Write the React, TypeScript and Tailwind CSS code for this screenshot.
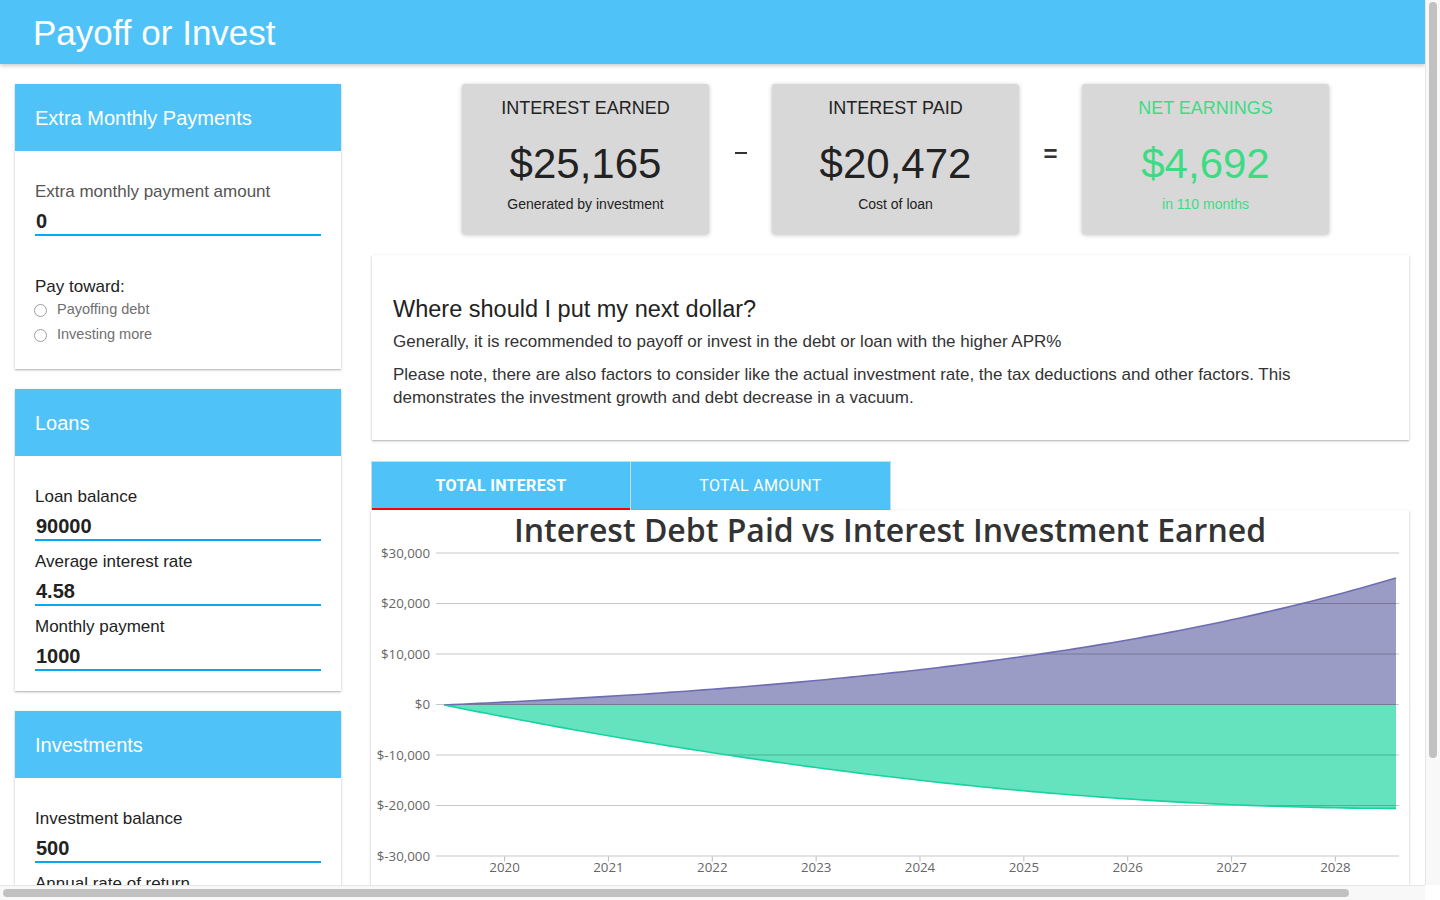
import React from 'react';

const BLUE = 'bg-[#4fc3f7]';

// chart geometry (page coords -> svg coords)
const OX = 371;
const OY = 548;
const X = (m: number) => 444 + (m * 952) / 110 - OX;
const Y = (v: number) => 705 - (v * 50.5) / 10000 - OY;

function buildSeries() {
  // loan amortization, cumulative interest paid
  let balance = 90000;
  const r = 0.0458 / 12;
  let cum = 0;
  const paid = [0];
  for (let m = 1; m <= 110; m++) {
    const interest = balance * r;
    cum += interest;
    balance -= 1000 - interest;
    paid.push(cum);
  }
  const s = 20472 / paid[110];
  const debt = paid.map((v) => -v * s);
  const k = 0.01737;
  const earned = paid.map((_, m) => (25165 * (Math.exp(k * m) - 1)) / (Math.exp(k * 110) - 1));
  return { debt, earned };
}

const { debt, earned } = buildSeries();

const linePath = (vals: number[]) =>
  vals.map((v, m) => `${m === 0 ? 'M' : 'L'}${X(m).toFixed(1)},${Y(v).toFixed(1)}`).join(' ');
const areaPath = (vals: number[]) =>
  `${linePath(vals)} L${X(110).toFixed(1)},${Y(0).toFixed(1)} L${X(0).toFixed(1)},${Y(0).toFixed(1)} Z`;

const yLabels = ['$30,000', '$20,000', '$10,000', '$0', '$-10,000', '$-20,000', '$-30,000'];
const years = [2020, 2021, 2022, 2023, 2024, 2025, 2026, 2027, 2028];

function Chart() {
  const bottom = Y(-30000);
  return (
    <svg width="1038" height="360" className="block font-['Open_Sans',sans-serif]">
      <path d={areaPath(earned)} fill="#9a9cc6" />
      <path d={areaPath(debt)} fill="#64e3be" />
      {yLabels.map((l, i) => {
        const y = Y(30000 - i * 10000) - 0.5;
        return (
          <g key={l}>
            <line x1="65" x2="1028" y1={y} y2={y} stroke="#000" strokeOpacity="0.22" strokeWidth="1" />
            <text x="59" y={y + 4.5} textAnchor="end" fontSize="13.3" fill="#666">
              {l}
            </text>
          </g>
        );
      })}
      {years.map((yr, n) => {
        const x = X(7 + 12 * n);
        return (
          <g key={yr}>
            <line x1={x} x2={x} y1={bottom} y2={bottom + 5} stroke="#bbb" />
            <text x={x} y={bottom + 15} textAnchor="middle" fontSize="13.3" fill="#666">
              {yr}
            </text>
          </g>
        );
      })}
      <path d={linePath(earned)} fill="none" stroke="#6c6db2" strokeWidth="1.6" />
      <path d={linePath(debt)} fill="none" stroke="#17d3a0" strokeWidth="1.6" />
    </svg>
  );
}

function Panel({ title, children }: { title: string; children: React.ReactNode }) {
  return (
    <div className="bg-white shadow-[0_1px_3px_rgba(0,0,0,0.2),0_1px_1px_rgba(0,0,0,0.12)]">
      <div className={`h-[67px] ${BLUE} flex items-center px-[20px] text-white text-[20px]`}>{title}</div>
      <div className="px-[20px] pt-[31px] pb-[20px]">{children}</div>
    </div>
  );
}

function Field({ label, value, light }: { label: string; value: string; light?: boolean }) {
  return (
    <div className="mb-[11px] last:mb-0">
      <div className={`text-[17px] leading-[20px] ${light ? 'text-[#555]' : 'text-[#222]'}`}>{label}</div>
      <div className="h-[34px] flex items-end pb-[3px] border-b-2 border-[#03a9f4] text-[20px] leading-[20px] font-bold text-[#222] pl-[1px]">
        {value}
      </div>
    </div>
  );
}

function Radio({ label }: { label: string }) {
  return (
    <div className="flex items-center h-[20px] -ml-[1px]">
      <span className="w-[13px] h-[13px] rounded-full border border-[#9e9e9e] bg-white" />
      <span className="ml-[10px] text-[14.5px] text-[#707070]">{label}</span>
    </div>
  );
}

function Stat({ title, value, sub, green }: { title: string; value: string; sub: string; green?: boolean }) {
  const c = green ? 'text-[#3ddc84]' : 'text-[#222]';
  return (
    <div className="w-[247px] h-[150px] bg-[#d8d8d8] rounded-[3px] shadow-[0_1px_4px_rgba(0,0,0,0.25)] flex flex-col items-center pt-[13px]">
      <div className={`text-[18px] leading-[22px] ${c}`}>{title}</div>
      <div className={`mt-[21px] text-[42px] leading-[48px] ${c}`}>{value}</div>
      <div className={`mt-[7px] text-[14px] leading-[18px] ${c}`}>{sub}</div>
    </div>
  );
}

export default function App() {
  return (
    <div className="w-[1440px] h-[900px] flex flex-col overflow-hidden bg-white font-['Liberation_Sans',Arial,sans-serif]">
      <div className="flex h-[885px]">
        <div className="w-[1425px] h-[885px] overflow-hidden flex flex-col">
          {/* Header */}
          <div className={`h-[64px] shrink-0 ${BLUE} flex items-center px-[33px] shadow-[0_2px_4px_rgba(0,0,0,0.2)] relative z-10`}>
            <h1 className="text-[35px] text-white leading-none">Payoff or Invest</h1>
          </div>

          <div className="flex gap-[30px] px-[15px] pt-[20px]">
            {/* Left column */}
            <div className="w-[326px] shrink-0 flex flex-col gap-[20px]">
              <Panel title="Extra Monthly Payments">
                <Field label="Extra monthly payment amount" value="0" light />
                <div className="mt-[41px] text-[17px] leading-[20px] text-[#222]">Pay toward:</div>
                <div className="mt-[3px] flex flex-col gap-[5px] pb-[4px]">
                  <Radio label="Payoffing debt" />
                  <Radio label="Investing more" />
                </div>
              </Panel>
              <Panel title="Loans">
                <Field label="Loan balance" value="90000" />
                <Field label="Average interest rate" value="4.58" />
                <Field label="Monthly payment" value="1000" />
              </Panel>
              <Panel title="Investments">
                <Field label="Investment balance" value="500" />
                <Field label="Annual rate of return" value="7" />
                <Field label="Monthly contribution" value="1000" />
              </Panel>
            </div>

            {/* Right column */}
            <div className="w-[1038px] shrink-0 flex flex-col">
              <div className="flex pl-[91px] h-[150px]">
                <Stat title="INTEREST EARNED" value="$25,165" sub="Generated by investment" />
                <div className="w-[63px] flex justify-center pt-[68px]">
                  <span className="w-[12px] h-[2px] bg-[#333]" />
                </div>
                <Stat title="INTEREST PAID" value="$20,472" sub="Cost of loan" />
                <div className="w-[63px] flex justify-center pt-[56px] text-[24px] leading-[28px] text-[#333] font-bold">=</div>
                <Stat title="NET EARNINGS" value="$4,692" sub="in 110 months" green />
              </div>

              <div className="mt-[21px] bg-white shadow-[0_1px_3px_rgba(0,0,0,0.2),0_1px_1px_rgba(0,0,0,0.12)] px-[21px] pt-[40px] pb-[31px] ml-[1px]">
                <h2 className="text-[23.5px] leading-[28px] text-[#222]">Where should I put my next dollar?</h2>
                <p className="mt-[7px] text-[17px] leading-[23px] text-[#333]">
                  Generally, it is recommended to payoff or invest in the debt or loan with the higher APR%
                </p>
                <p className="mt-[10px] text-[17px] leading-[23px] text-[#333] max-w-[960px]">
                  Please note, there are also factors to consider like the actual investment rate, the tax deductions and
                  other factors. This demonstrates the investment growth and debt decrease in a vacuum.
                </p>
              </div>

              {/* Tabs */}
              <div className="mt-[21px] flex font-['Roboto',sans-serif] text-[16px] text-white">
                <div className={`w-[260px] h-[49px] ${BLUE} border border-[#cfd8dc] border-b-0 flex items-center justify-center font-bold tracking-[0.02em] relative`}>
                  TOTAL INTEREST
                  <span className="absolute left-0 right-0 bottom-0 h-[2px] bg-[#ff0000]" />
                </div>
                <div className={`w-[260px] h-[49px] ${BLUE} border border-l-0 border-[#cfd8dc] border-b-0 flex items-center justify-center tracking-[0.02em]`}>
                  TOTAL AMOUNT
                </div>
              </div>

              {/* Chart */}
              <div className="h-[420px] bg-white shadow-[0_1px_3px_rgba(0,0,0,0.2),0_1px_1px_rgba(0,0,0,0.12)]">
                <div className="pt-[2px] h-[38px] text-center font-['Open_Sans',sans-serif] font-semibold text-[32px] leading-[36px] text-[#333]">
                  Interest Debt Paid vs Interest Investment Earned
                </div>
                <Chart />
              </div>
            </div>
          </div>
        </div>

        {/* vertical scrollbar */}
        <div className="w-[15px] h-[885px] bg-[#f8f8f8] border-l border-[#e6e6e6] flex justify-center pt-[2px]">
          <div className="w-[8px] h-[756px] rounded-full bg-[#c1c1c1]" />
        </div>
      </div>

      {/* horizontal scrollbar */}
      <div className="h-[15px] flex">
        <div className="w-[1425px] bg-[#f8f8f8] border-t border-[#e6e6e6] pl-[3px] pt-[3px]">
          <div className="w-[1346px] h-[8px] rounded-full bg-[#c1c1c1]" />
        </div>
        <div className="w-[15px] bg-white" />
      </div>
    </div>
  );
}
